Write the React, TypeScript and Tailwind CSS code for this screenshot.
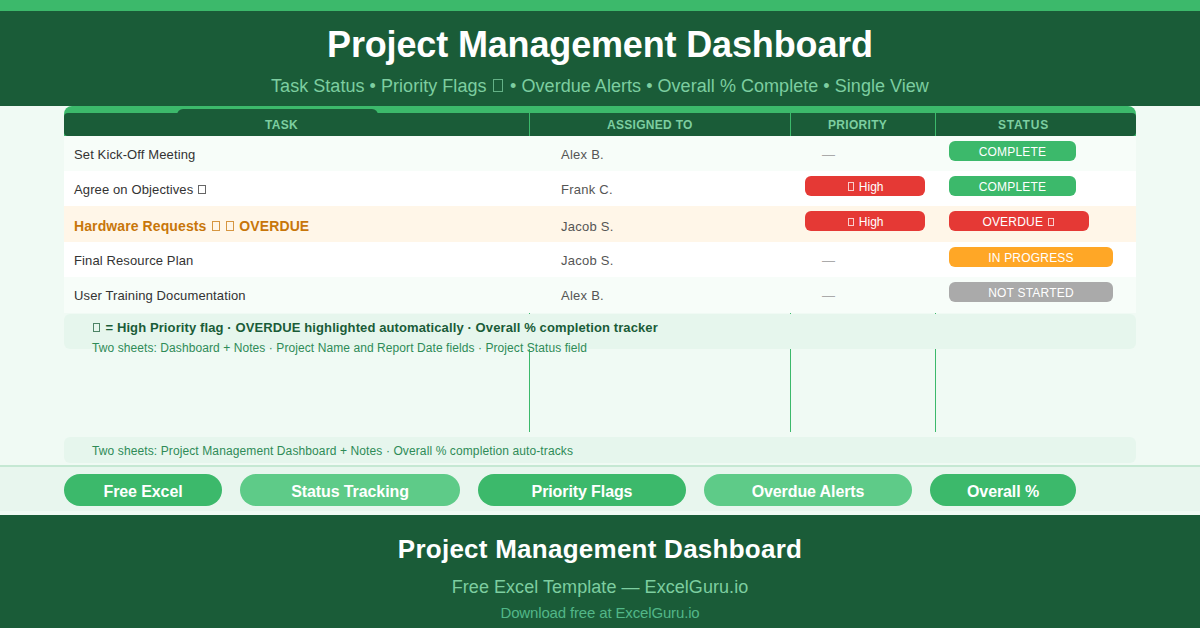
const Tofu = () => (
  <span className="mx-[0.1em] inline-block h-[0.72em] w-[0.55em] border border-current opacity-75"></span>
);

// the "□" marks the flag glyph that has no font in the picture
const withTofu = (text: string) =>
  text.split("□").map((part, i) => (
    <span key={i}>
      {i > 0 && <Tofu />}
      {part}
    </span>
  ));

const rows = [
  { task: "Set Kick-Off Meeting", who: "Alex B.", high: false, status: "COMPLETE", tone: "bg-[#f7fdf9]", nudge: "pt-[2px]" },
  { task: "Agree on Objectives □", who: "Frank C.", high: true, status: "COMPLETE", tone: "bg-white", nudge: "pt-[3px]" },
  { task: "Hardware Requests □ □ OVERDUE", who: "Jacob S.", high: true, status: "OVERDUE □", tone: "bg-[#fff6e8]", nudge: "pt-[5px]", overdue: true },
  { task: "Final Resource Plan", who: "Jacob S.", high: false, status: "IN PROGRESS", tone: "bg-white", nudge: "pt-[3px]" },
  { task: "User Training Documentation", who: "Alex B.", high: false, status: "NOT STARTED", tone: "bg-[#f7fdf9]", nudge: "pt-[2px]" },
];

const statusWidth = (status: string) => {
  if (status === "COMPLETE") return "w-[127px] bg-[#3cb96b]";
  if (status === "IN PROGRESS") return "w-[164px] bg-[#ffa726]";
  if (status === "NOT STARTED") return "w-[164px] bg-[#aaaaaa]";
  return "w-[140px] bg-[#e53935]";
};

const chips = [
  { label: "Free Excel", cls: "w-[158px] bg-[#3cb96b]" },
  { label: "Status Tracking", cls: "w-[220px] bg-[#5ecb88]" },
  { label: "Priority Flags", cls: "w-[208px] bg-[#3cb96b]" },
  { label: "Overdue Alerts", cls: "w-[208px] bg-[#5ecb88]" },
  { label: "Overall %", cls: "w-[146px] bg-[#3cb96b]" },
];

export default function App() {
  return (
    <div className="w-[1200px] h-[628px] overflow-hidden flex flex-col bg-[#f0faf4] font-['Liberation_Sans',Arial,sans-serif]">
      {/* Header */}
      <header className="h-[106px] shrink-0 bg-[#1a5c38] border-t-[11px] border-[#3cb96b] text-center">
        <h1 className="pt-[13px] text-[36px] leading-[42px] font-bold text-white tracking-[-0.15px]">Project Management Dashboard</h1>
        <p className="mt-[9px] text-[18px] leading-[22px] tracking-[0.04px] text-[#7dcea0]">{withTofu("Task Status • Priority Flags □ • Overdue Alerts • Overall % Complete • Single View")}</p>
      </header>

      {/* Table area */}
      <main className="relative h-[359px] shrink-0 px-16">
        <div className="absolute left-[529px] top-[7px] h-[319px] w-px bg-[#3cb96b]"></div>
        <div className="absolute left-[790px] top-[7px] h-[319px] w-px bg-[#3cb96b]"></div>
        <div className="absolute left-[935px] top-[7px] h-[319px] w-px bg-[#3cb96b]"></div>

        <div className="relative">
          <div className="rounded-t-lg bg-[#3cb96b] pt-[7px]">
            <div className="absolute left-[113px] top-[3px] h-2 w-[201px] rounded-t-md bg-[#1a5c38]"></div>
            <div className="relative flex h-[22.6px] rounded-[4px] bg-[#1a5c38] text-[12px] font-bold leading-[25px] tracking-[0.3px] text-[#7dcea0]">
              <div className="w-[465px] pl-[201px]">TASK</div>
              <div className="w-[261px] border-l border-[#3cb96b] pl-[77px]">ASSIGNED TO</div>
              <div className="w-[145px] border-l border-[#3cb96b] pl-[37px]">PRIORITY</div>
              <div className="flex-1 border-l border-[#3cb96b] pl-[62px] tracking-[0.8px]">STATUS</div>
            </div>
          </div>

          {rows.map((row) => (
            <div key={row.task} className={`relative flex h-[35.4px] ${row.tone}`}>
              <div className={`w-[465px] flex items-center pl-[10px] ${row.nudge} ${row.overdue ? "text-[14px] font-bold tracking-[0.1px] text-[#c8760a]" : "text-[13px] tracking-[0.12px] text-[#333333]"}`}>
                <span>{withTofu(row.task)}</span>
              </div>
              <div className={`w-[261px] flex items-center pl-[32px] text-[13px] tracking-[0.25px] text-[#555555] ${row.nudge}`}>{row.who}</div>
              <div className="w-[145px] pt-[5px]">
                {row.high ? (
                  <div className="ml-[15px] h-5 w-[120px] rounded-md bg-[#e53935] text-center text-[12px] leading-[22px] text-white">{withTofu("□ High")}</div>
                ) : (
                  <div className="pl-[32px] text-[13px] leading-[28px] text-[#aaaaaa]">—</div>
                )}
              </div>
              <div className="flex-1 pt-[5px] pl-[14px]">
                <div className={`h-5 rounded-md text-center text-[12px] leading-[22px] tracking-[0.2px] text-white ${statusWidth(row.status)}`}>{withTofu(row.status)}</div>
              </div>
            </div>
          ))}
        </div>

        <div className="relative mt-[1.4px] h-[35px] rounded-md bg-[#e6f6ed] pl-7 pt-[6px]">
          <p className="text-[13px] leading-[15px] font-bold tracking-[0.11px] text-[#1a5c38]">{withTofu("□ = High Priority flag · OVERDUE highlighted automatically · Overall % completion tracker")}</p>
          <p className="mt-[6px] text-[12px] leading-[14px] tracking-[0.08px] text-[#2e8b57]">Two sheets: Dashboard + Notes · Project Name and Report Date fields · Project Status field</p>
        </div>

        <div className="relative mt-[88px] h-[26px] rounded-md bg-[#e6f6ed] pl-7 pt-px text-[12px] leading-[26px] tracking-[0.11px] text-[#2e8b57]">
          Two sheets: Project Management Dashboard + Notes · Overall % completion auto-tracks
        </div>
      </main>

      {/* Feature chips */}
      <div className="h-[46px] shrink-0 border-t-2 border-[#c5e8d3] bg-[#e8f6ee] px-16 pt-[7px]">
        <div className="flex gap-[18px]">
          {chips.map((chip) => (
            <div key={chip.label} className={`h-[32px] rounded-full text-center text-[16px] font-bold leading-[36px] tracking-[-0.1px] text-white ${chip.cls}`}>{chip.label}</div>
          ))}
        </div>
      </div>

      {/* Footer */}
      <footer className="mt-[4px] flex-1 bg-[#1a5c38] text-center">
        <h2 className="pt-[19px] text-[26px] leading-[30px] font-bold tracking-[0.25px] text-white">Project Management Dashboard</h2>
        <p className="mt-[12px] text-[18px] leading-[22px] tracking-[0.05px] text-[#7dcea0]">Free Excel Template — ExcelGuru.io</p>
        <p className="mt-[6px] text-[15px] leading-[17px] tracking-[-0.15px] text-[#52b788]">Download free at ExcelGuru.io</p>
      </footer>
    </div>
  );
}
